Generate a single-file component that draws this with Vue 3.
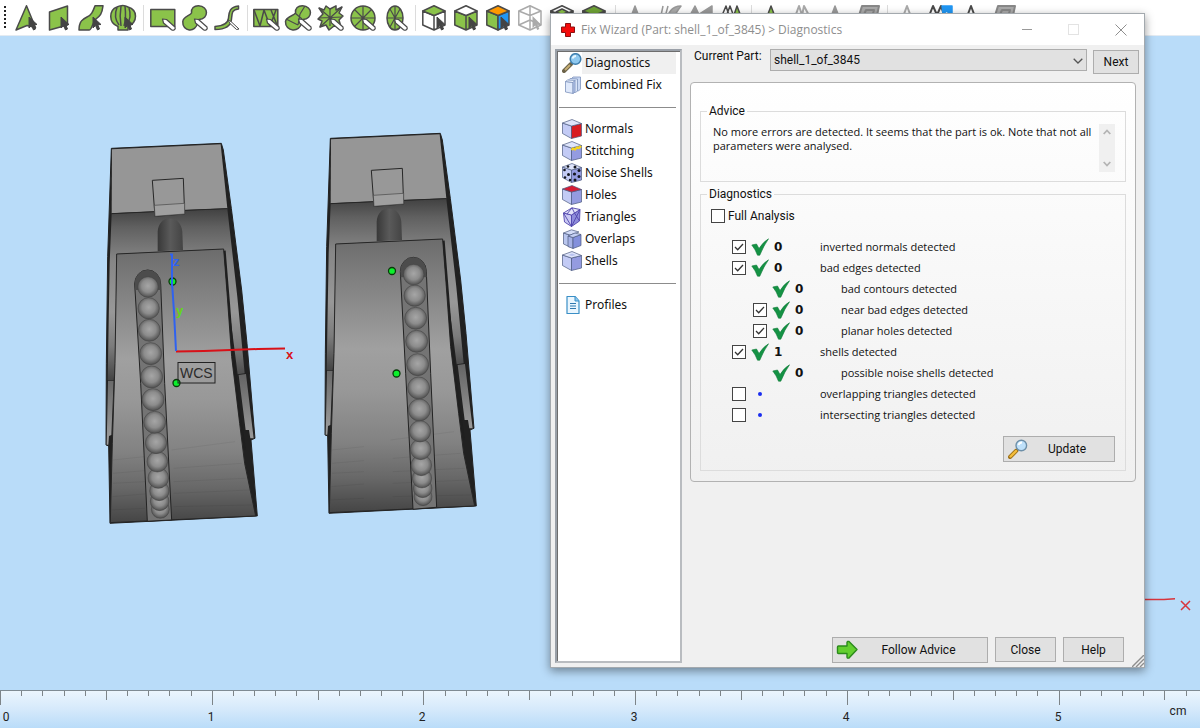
<script setup>
import { ref } from 'vue'

const tools = [
  'tri', 'quad', 'strip', 'shell', '|',
  'rect', 'blob', 'curve', '|',
  'mesh', 'meshblob', 'burst', 'wheel', 'oval', '|',
  'cubeTop', 'cubeSides', 'cubeColor', 'cubeGhost', 'cubeOpen', 'cubeFull', '|',
  'peakGrey', 'arcGrey', 'pairGrey', 'pairGreen', '|',
  'peakGreen', 'linesGrey', 'peakGrey', 'slab', '|',
  'peakOutline', 'peaksBlue', 'peakDark', 'slab'
]

const menu = [
  [{ name: 'Diagnostics', icon: 'lens' }, { name: 'Combined Fix', icon: 'stack' }],
  [
    { name: 'Normals', icon: 'normals' },
    { name: 'Stitching', icon: 'stitching' },
    { name: 'Noise Shells', icon: 'noise' },
    { name: 'Holes', icon: 'holes' },
    { name: 'Triangles', icon: 'triangles' },
    { name: 'Overlaps', icon: 'overlaps' },
    { name: 'Shells', icon: 'shells' }
  ],
  [{ name: 'Profiles', icon: 'profiles' }]
]
const current = ref('Diagnostics')
const part = ref('shell_1_of_3845')
const full = ref(false)

const rows = ref([
  { text: 'inverted normals detected', count: '0', box: true, on: true },
  { text: 'bad edges detected', count: '0', box: true, on: true },
  { text: 'bad contours detected', count: '0', sub: true },
  { text: 'near bad edges detected', count: '0', sub: true, box: true, on: true },
  { text: 'planar holes detected', count: '0', sub: true, box: true, on: true },
  { text: 'shells detected', count: '1', box: true, on: true },
  { text: 'possible noise shells detected', count: '0', sub: true },
  { text: 'overlapping triangles detected', count: '', box: true, on: false },
  { text: 'intersecting triangles detected', count: '', box: true, on: false }
])

const ballsA = [
  [159, 471, 31], [161, 535, 32], [163, 601, 33], [167, 671, 33], [170, 741, 33], [174, 809, 33], [179, 877, 33],
  [183, 939, 32], [187, 995, 31], [190, 1044, 31], [193, 1083, 29], [194, 1114, 28], [196, 1138, 27]
]
const ballsB = [
  [299, 464, 31], [302, 527, 32], [305, 595, 33], [308, 664, 33], [311, 734, 33], [314, 804, 33], [316, 870, 33],
  [318, 934, 32], [320, 988, 31], [322, 1036, 31], [324, 1075, 29], [326, 1105, 28], [327, 1130, 27]
]
const models = [
  {
    at: 'translate(95 130) scale(0.3333)', balls: [...ballsA].reverse(),
    slot: 'M119 462 A39 42 0 0 1 197 462 L209 760 L230 1170 L157 1174 L137 760 Z',
    cap: 'M119 462 A39 42 0 0 1 197 462 L197 480 L120 480 Z'
  },
  {
    at: 'translate(314 120) scale(0.3333)', balls: [...ballsB].reverse(),
    slot: 'M259 454 A39 42 0 0 1 337 454 L350 760 L368 1162 L297 1168 L275 760 Z',
    cap: 'M259 454 A39 42 0 0 1 337 454 L338 472 L260 472 Z'
  }
]

const step = 21.17
const ticks = Array.from({ length: 57 }, (_, i) => ({
  x: Math.round(i * step) + 0.5,
  len: i % 10 === 0 ? 14 : i % 5 === 0 ? 9 : 5
}))
const marks = [0, 1, 2, 3, 4, 5].map(n => ({ n, x: n ? Math.round(n * step * 10) - 1 : 6 }))
</script>

<template>
  <div class="app">
    <header class="toolbar" aria-label="Marking tools">
      <span class="grip"></span>
      <template v-for="(t, i) in tools" :key="i">
        <span v-if="t === '|'" class="sep"></span>
        <button v-else type="button" class="tool" :aria-label="t">
          <svg width="26" height="26" viewBox="0 0 26 26" fill="#8bc34a" stroke="#4a4a4a" stroke-width="1.5" stroke-linejoin="round">
            <path v-if="t === 'tri'" d="M12.5 .8 L2 25 L13 20.5 L21.5 22.5Z" />
            <path v-if="t === 'quad'" d="M3.5 7 L21.5 1 V20 L3.5 25Z" />
            <path v-if="t === 'strip'" d="M17 .8 H25 C24 9 22 11 18 14 C14 18 14 25 11 25 H1 C1 16 5 14 9 12 C14 10 15 6 17 .8Z" />
            <g v-if="t === 'shell'">
              <path d="M8 25 V21.500 C-2 18 -1 5 7 2 Q13 -1 18 2 C28 5 28 17 18 21.500 V25Z" />
              <path fill="none" d="M7 2.500 C4 10 6 16 9 20 M11 1 C9.500 10 10 15 11 21 M15 1 C16 10 16 15 14 21 M19 3 C21 9 20 15 17 20" />
            </g>
            <rect v-if="t === 'rect'" x=".8" y="4.500" width="24" height="17" />
            <path v-if="t === 'blob'" d="M9.500 8 C9 3 12 .8 16.500 .8 C27 1 27 14 17 14.500 C15.500 15 16 16 15.500 18 C14 28 0 27 .8 16.500 C1.500 11 8 11 9.500 8Z" />
            <path v-if="t === 'curve'" d="M24.500 1 C15 2 15 8 14.500 13 C14 19 8 21 1 21.500 V24.500 C11 24.500 17 21 17.500 14 C18 8 18 4.500 24.500 4Z" />
            <g v-if="t === 'mesh'">
              <rect x="-.2" y="4.500" width="24" height="17" />
              <path fill="none" d="M0 5 L6 21 L10 5 L16 21 L22 5 M17 5 L23 20" />
            </g>
            <g v-if="t === 'meshblob'">
              <path d="M9.500 8 C9 3 12 .8 16.500 .8 C27 1 27 14 17 14.500 C15.500 15 16 16 15.500 18 C14 28 -1 27 -.5 16.500 C.5 11 8 11 9.500 8Z" />
              <path fill="none" stroke-width="1.200" d="M14 9 L19 1 M9 8 L16 14 M14 9 L12 20 M0 14 L12 20" />
            </g>
            <g v-if="t === 'burst'">
              <path d="M1 3 L6 5 L8 1 L12 4 L18 .8 L18 5 L24 2 L21 8 L25 11 L21 15 L23 22 L16 21 L11 25 L8 20 L2 22 L4 16 L0 14 L5 9Z" />
              <path fill="none" stroke-width="1.200" d="M1 3 L23 22 M24 2 L2 22 M12 4 V21 M1 13 L24 12" />
            </g>
            <g v-if="t === 'wheel'">
              <circle cx="13" cy="13" r="12" />
              <path fill="none" stroke-width="1.200" d="M13 1 V25 M1 13 H25 M4.500 4.500 L21.500 21.500 M21.500 4.500 L4.500 21.500" />
            </g>
            <g v-if="t === 'oval'">
              <ellipse cx="13" cy="13" rx="8" ry="12" />
              <path fill="none" stroke-width="1.200" d="M13 1 V25 M5 13 H21 M8 4 L18 22 M18 4 L8 22" />
            </g>
            <g v-if="t === 'cubeTop'">
              <path fill="#fff" d="M.8 6 L12 10.500 L23 6 V20 L12 25 L.8 20Z M12 10.500 V25" />
              <path d="M12 .8 L23 6 L12 10.500 L.8 6Z" />
            </g>
            <g v-if="t === 'cubeSides' || t === 'cubeFull' || t === 'cubeOpen'">
              <path d="M.8 6 L12 10.500 L23 6 V20 L12 25 L.8 20Z M12 10.500 V25" />
              <path :fill="t === 'cubeFull' ? '#6fa336' : '#fff'" d="M12 .8 L23 6 L12 10.500 L.8 6Z" />
              <path v-if="t === 'cubeOpen'" fill="#8bc34a" d="M12 4 L18 7 L12 9.500 L6 7Z" />
            </g>
            <g v-if="t === 'cubeColor'">
              <path d="M.8 6 L12 10.500 V25 L.8 20Z" />
              <path fill="#2196f3" d="M23 6 L12 10.500 V25 L23 20Z" />
              <path fill="#ff9800" d="M12 .8 L23 6 L12 10.500 L.8 6Z" />
            </g>
            <g v-if="t === 'cubeGhost'" fill="#fff" stroke="#aaa">
              <path d="M12 .8 L23 6 V20 L12 25 L.8 20 V6Z" />
              <path fill="none" d="M.8 6 L12 10.500 L23 6 M12 10.500 V25 M.8 20 L12 15 L23 20 M12 1 V15" />
              <path fill="#aaa" stroke="none" d="M14.500 11 V23 L17.200 20.500 L19.200 25 L21.400 24 L19.500 19.700 L23 19.500Z" />
            </g>
            <path v-if="t === 'peakGrey'" fill="#999" stroke="#999" d="M13 1 L22 25 H4Z" />
            <path v-if="t === 'peakGreen'" d="M13 1 L22 25 H4Z" />
            <path v-if="t === 'peakDark'" fill="#fff" stroke-width="2" d="M13 1 L22 25 H4Z" />
            <path v-if="t === 'peakOutline'" fill="#fff" stroke="#aaa" stroke-width="2" d="M13 1 L22 25 H4Z" />
            <path v-if="t === 'arcGrey'" fill="#aaa" stroke="#999" d="M9 1 L5 20 M14 1 L11 12 M27 1 C17 1 13 8 12 20 L22 22 C18 12 22 8 27 1Z" />
            <path v-if="t === 'pairGrey'" fill="#999" stroke="#999" d="M9 1 L2 14 H15Z M26 1 V14 L12 10Z" />
            <g v-if="t === 'pairGreen'">
              <path fill="#fff" d="M8 1 L0 20 H14Z M12 1 L5 20 H19Z" />
              <path d="M19 1 L12 22 H27Z" />
            </g>
            <path v-if="t === 'linesGrey'" fill="none" stroke="#aaa" stroke-width="2" d="M2 20 L9 1 L14 16 M10 20 L14 1 L24 20" />
            <path v-if="t === 'slab'" fill="#aaa" stroke="#888" stroke-width="2" d="M8 1 H25 L21 20 H2Z M12 5 H20 L18 12 H9Z" />
            <g v-if="t === 'peaksBlue'">
              <path fill="#fff" stroke-width="2" d="M1 16 L7 1 L11 10 L15 1 L20 16Z" />
              <path fill="#2196f3" stroke="#2196f3" d="M16 1 H26 V12 L21 6 L17 9Z" />
            </g>
            <path v-if="['tri','quad','strip','shell','cubeTop','cubeSides','cubeColor'].includes(t)" fill="#444" stroke="#444" stroke-width="1" d="M15 12 V23 L17.500 20.500 L19.500 25 L21.500 24 L19.800 19.700 L23 19.500Z" />
            <path v-if="['rect','blob','mesh','meshblob','burst','wheel','oval'].includes(t)" fill="#fff" stroke-width="1.200" d="M12.500 14 L16.500 14.500 L25 22 C26 24.500 23.500 26 21.500 24.800 L13.500 18Z" />
            <path v-if="t === 'curve'" fill="#fff" stroke-width="1" d="M14 15 L17 16.500 L25 24 L22.500 24.500 L16 18.500Z" />
          </svg>
        </button>
      </template>
    </header>

    <main class="view">
      <svg class="scene" viewBox="0 36 1200 655" preserveAspectRatio="xMinYMin slice">
        <defs>
          <linearGradient id="back" x1="0" y1="240" x2="0" y2="750" gradientUnits="userSpaceOnUse">
            <stop offset="0" stop-color="#434343" /><stop offset=".1" stop-color="#606060" />
            <stop offset=".3" stop-color="#868686" /><stop offset=".6" stop-color="#989898" />
            <stop offset=".8" stop-color="#7c7c7c" /><stop offset="1" stop-color="#444" />
          </linearGradient>
          <linearGradient id="front" x1="0" y1="357" x2="0" y2="1180" gradientUnits="userSpaceOnUse">
            <stop offset="0" stop-color="#6c6c6c" /><stop offset=".15" stop-color="#808080" />
            <stop offset=".4" stop-color="#a0a0a0" /><stop offset=".55" stop-color="#989898" />
            <stop offset=".74" stop-color="#828282" /><stop offset=".87" stop-color="#686868" />
            <stop offset="1" stop-color="#444" />
          </linearGradient>
          <linearGradient id="flap" x1="0" y1="735" x2="0" y2="940" gradientUnits="userSpaceOnUse">
            <stop offset="0" stop-color="#656565" /><stop offset="1" stop-color="#9e9e9e" />
          </linearGradient>
          <linearGradient id="bore" x1="0" y1="0" x2="1" y2="0">
            <stop offset="0" stop-color="#383838" /><stop offset=".5" stop-color="#5a5a5a" /><stop offset="1" stop-color="#444" />
          </linearGradient>
          <radialGradient id="ball" cx=".5" cy=".45" r=".55">
            <stop offset="0" stop-color="#a6a6a6" /><stop offset=".55" stop-color="#8c8c8c" /><stop offset="1" stop-color="#4f4f4f" />
          </radialGradient>
        </defs>

        <g v-for="(m, i) in models" :key="i" :transform="m.at" stroke-linejoin="round">
          <path fill="#212121" stroke="#212121" stroke-width="3" d="M49 55 L379 40 L385 60 L409 235 L440 480 L456 640 L464 735 L480 925 L468 930 L487 1158 L45 1180 L41 948 L33 945 L34 700 L38 380Z" />
          <path fill="url(#back)" d="M50 251 L397 236 L427 500 L449 730 L428 733 L406 560 L386 357 L65 372 L60 700 L56 750 L38 750 L44 400Z" />
          <path fill="url(#flap)" d="M39 752 H56 L49 915 L42 918 L40 944 L35 944Z M431 735 L453 732 L476 925 L466 925 L462 900 L452 900Z" />
          <path fill="#969696" d="M51 58 L377 43 L397 235 L50 250Z" />
          <path fill="none" stroke="#262626" stroke-width="3" d="M50 251 L178 245 M269 241 L397 236" />
          <path fill="#989898" stroke="#262626" stroke-width="3" d="M172 151 L265 145 L269 252 L180 259Z" />
          <path fill="#a0a0a0" stroke="#444" stroke-width="2" d="M178 226 L269 220 V252 L180 259Z" />
          <path fill="url(#bore)" d="M188 364 V305 C190 252 258 252 262 305 L264 360Z" />
          <path fill="url(#front)" stroke="#262626" stroke-width="3" d="M65 372 L386 357 L397 500 L410 680 L434 880 L449 1000 L482 1158 L46 1178 L52 940 L60 700Z" />
          <path fill="none" stroke="#1f1f1f" stroke-width="6" d="M389 362 L402 520 L414 680 L437 870 L450 960" />
          <g fill="none" stroke="#000" stroke-width="3" opacity=".06">
            <path d="M54 990 L150 980 M54 1030 L150 1022 M236 1015 L440 1000 M54 1060 L150 1055 M236 1055 L452 1045 M52 1100 L150 1092 M236 1090 L466 1080 M50 1140 L150 1135 M236 1130 L472 1125 M230 960 L420 935" />
          </g>
          <path :d="m.slot" fill="#747474" stroke="#222" stroke-width="3" />
          <path :d="m.cap" fill="#4c4c4c" />
          <circle v-for="b in m.balls" :key="b[1]" :cx="b[0]" :cy="b[1]" :r="b[2]" fill="url(#ball)" stroke="#404040" stroke-width="1.500" />
        </g>

        <path fill="none" stroke="#d81118" stroke-width="2" d="M176 351.500 L204 351 L230 350 L258 349 L285 348.500" />
        <path fill="none" stroke="#2f62f0" stroke-width="2" d="M170 254.500 H172 V282 L174 312 L176 351" />
        <g fill="#0cf02c" stroke="#0a3a0a" stroke-width="1.300">
          <circle cx="172.500" cy="281.500" r="3.500" /><circle cx="176.500" cy="383" r="3.500" />
          <circle cx="392" cy="271" r="3.500" /><circle cx="396.500" cy="373.500" r="3.500" />
        </g>
        <path stroke="#2f62f0" stroke-width="2" d="M172 276 V287" />
        <g class="axis">
          <text x="173" y="266" fill="#2f62f0">z</text>
          <text x="176" y="315" fill="#62d818">y</text>
          <text x="286" y="359" fill="#d81118">x</text>
        </g>
        <rect x="178" y="362.500" width="37" height="20.500" fill="none" stroke="#222" />
        <text class="wcs" x="180" y="378">WCS</text>
        <path stroke="#d8343c" stroke-width="1.500" fill="none" d="M1140 599.500 H1164 L1175 598.800 M1181 601 L1190 610 M1190 601 L1181 610" />
      </svg>
    </main>

    <footer class="ruler">
      <svg class="scale" viewBox="0 0 1200 38" preserveAspectRatio="xMinYMin slice">
        <path v-for="t in ticks" :key="t.x" :d="`M${t.x} 0 v${t.len}`" stroke="#7d8488" />
        <text v-for="m in marks" :key="m.n" :x="m.x" y="30" text-anchor="middle">{{ m.n }}</text>
        <text x="1178" y="24" text-anchor="middle">cm</text>
      </svg>
    </footer>

    <section class="dialog" role="dialog" aria-labelledby="dlg-title">
      <div class="titlebar">
        <svg width="16" height="16" viewBox="0 0 16 16"><path fill="#f40b0b" stroke="#8d1010" d="M5.500 1.500 H10.500 V5 H14.500 V10.500 H10.500 V14.500 H5.500 V10.500 H1.500 V5 H5.500Z" /></svg>
        <h1 id="dlg-title">Fix Wizard (Part: shell_1_of_3845) &gt; Diagnostics</h1>
        <button type="button" class="win" aria-label="Minimize"><svg width="12" height="12" viewBox="0 0 12 12"><path d="M1 5.500 H11" stroke="#999" /></svg></button>
        <button type="button" class="win" aria-label="Maximize" disabled><svg width="12" height="12" viewBox="0 0 12 12"><rect x=".500" y=".500" width="10" height="10" fill="none" stroke="#e3e3e3" /></svg></button>
        <button type="button" class="win" aria-label="Close window"><svg width="12" height="12" viewBox="0 0 12 12"><path d="M.5 .5 L11.500 11.500 M11.500 .5 L.5 11.500" stroke="#8f8f8f" /></svg></button>
      </div>

      <div class="body">
        <nav class="side">
          <ul v-for="(group, g) in menu" :key="g">
            <li v-for="item in group" :key="item.name">
              <button type="button" class="item" :class="{ active: current === item.name }" @click="current = item.name">
                <svg width="20" height="20" viewBox="0 0 20 20" stroke-linejoin="round">
                  <g v-if="item.icon === 'lens'">
                    <path d="M9 11 L2 18" stroke="#6b6248" stroke-width="4" stroke-linecap="round" />
                    <path d="M8 12 L3 17" stroke="#c6ad72" stroke-width="2" />
                    <circle cx="13.500" cy="6" r="5.300" fill="#8fc9f0" stroke="#3f7fae" stroke-width="1.500" />
                    <path d="M10.500 5.500 Q11.500 3 14 3" stroke="#e6f6ff" stroke-width="2" fill="none" />
                  </g>
                  <g v-else-if="item.icon === 'stack'" stroke="#7d93bd" stroke-width=".8">
                    <path fill="#c9d8f3" d="M9 4 L11 2 H18.500 V14 L16.500 16 L9 15Z" />
                    <path fill="#dae5f8" d="M6 5.500 L8 3.500 L15.500 4 V16 L13.500 17.500 L6 16.500Z" />
                    <path fill="#dfe9fb" d="M3.500 6.500 L11 7.500 V18.500 L3.500 17Z" />
                    <path fill="#f2f6fe" d="M3.500 6.500 L5.500 5 L13 5.500 L11 7.500Z" />
                    <path fill="#b4c6ec" d="M11 7.500 L13 5.500 V17 L11 18.500Z" />
                  </g>
                  <g v-else-if="item.icon === 'profiles'">
                    <path d="M5 1.500 H13 L17 6 V18.500 H5Z" fill="#eaf6fe" stroke="#3a8fc6" stroke-width="1.200" />
                    <path d="M13 1.500 V6 H17" fill="#8fcaf0" stroke="#3a8fc6" />
                    <path d="M8 8.500 H14 M8 11 H14 M8 13.500 H14" stroke="#2f78ae" stroke-width="1.200" />
                  </g>
                  <g v-else-if="item.icon === 'triangles'" stroke="#5146ad" stroke-width=".9">
                    <path fill="#c9c8f3" d="M1.500 6 L9.500 8 V19.500 L2.500 15Z" />
                    <path fill="#8f8ddb" d="M9.500 8 L18 2.500 L17.500 14 L9.500 19.500Z" />
                    <path fill="#e3e3fa" d="M1.500 6 L10 .8 L18 2.500 L9.500 8Z" />
                    <path fill="none" d="M1.500 6 L9.500 19.500 L18 2.500 M5 7 L10 .8 L12.500 6 L17.500 14" />
                  </g>
                  <g v-else-if="item.icon === 'overlaps'" stroke="#4c5a80" stroke-width=".7">
                    <path fill="#b9c6ee" d="M1.500 4 L8 6 V18 L1.500 15Z" />
                    <path fill="#d3dcf7" d="M1.500 4 L9.500 .8 L17 3 L8 6Z" />
                    <path fill="#a6b2e6" d="M6 7 L11 8.500 V19.500 L6 17.500Z" />
                    <path fill="#8390dc" d="M11 8.500 L19 5.500 V16.500 L11 19.500Z" />
                    <path fill="#c5d0f3" d="M6 7 L13 4 L19 5.500 L11 8.500Z" />
                  </g>
                  <g v-else stroke="#4c5a80" stroke-width=".7">
                    <path fill="#c3cbf5" d="M.5 4 L9.500 7 V19.500 L.5 14.500Z" />
                    <path :fill="item.icon === 'normals' ? '#d81c22' : '#949be0'" d="M9.500 7 L19.500 4.500 V17 L9.500 19.500Z" />
                    <path :fill="item.icon === 'holes' ? '#d81c34' : '#dfe5fb'" d="M.5 4 L10 .5 L19.500 4.500 L9.500 7Z" />
                    <path v-if="item.icon === 'stitching'" fill="none" stroke="#f4d321" stroke-width="2.400" d="M9.500 9 L11 7.500 L13 8.500 L15 6.500 L17 7 L19 5" />
                    <path v-if="item.icon === 'shells'" fill="#b9c3ee" stroke="none" d="M6 4 L10 2.500 L14 4 L10 5Z" />
                    <g v-if="item.icon === 'noise'" fill="#15171f" stroke="none">
                      <circle cx="2.500" cy="7" r="1.300" /><circle cx="6.500" cy="11.500" r="1.500" /><circle cx="3" cy="14.500" r="1.300" />
                      <circle cx="6" cy="3.500" r="1.300" /><circle cx="13" cy="4" r="1.500" /><circle cx="12.500" cy="11" r="1.600" />
                      <circle cx="17" cy="7.500" r="1.500" /><circle cx="13" cy="17" r="1.500" /><circle cx="17" cy="13.500" r="1.500" />
                      <circle cx="8" cy="17" r="1.200" />
                    </g>
                  </g>
                </svg>
                <span>{{ item.name }}</span>
              </button>
            </li>
          </ul>
        </nav>

        <div class="main">
          <div class="partrow">
            <label for="part">Current Part:</label>
            <div class="combo">
              <select id="part" v-model="part"><option>shell_1_of_3845</option></select>
              <svg width="10" height="6" viewBox="0 0 10 6"><path d="M.7 .7 L5 5 L9.300 .7" fill="none" stroke="#555" stroke-width="1.300" /></svg>
            </div>
            <button type="button" class="btn next">Next</button>
          </div>

          <div class="panel">
            <fieldset class="advice">
              <legend>Advice</legend>
              <p>No more errors are detected. It seems that the part is ok. Note that not all parameters were analysed.</p>
              <div class="scroll">
                <button type="button" aria-label="Scroll up"><svg width="8" height="6" viewBox="0 0 8 6"><path d="M.7 5 L4 1.500 L7.300 5" fill="none" stroke="#b4b4b4" stroke-width="1.800" /></svg></button>
                <button type="button" aria-label="Scroll down"><svg width="8" height="6" viewBox="0 0 8 6"><path d="M.7 1 L4 4.500 L7.300 1" fill="none" stroke="#b4b4b4" stroke-width="1.800" /></svg></button>
              </div>
            </fieldset>

            <fieldset class="diag">
              <legend>Diagnostics</legend>
              <label class="full"><input v-model="full" type="checkbox"><span>Full Analysis</span></label>
              <div class="rows">
                <component :is="r.box ? 'label' : 'div'" v-for="r in rows" :key="r.text" class="row" :class="{ sub: r.sub }">
                  <input v-if="r.box" v-model="r.on" type="checkbox">
                  <span v-else></span>
                  <svg v-if="r.count" width="18" height="18" viewBox="0 0 18 18"><path fill="#149244" stroke="#0d7a38" stroke-width=".6" d="M.8 7 L5.500 6 L8 10.500 Q12 4 17.500 .8 Q12.500 8 8.800 17.200 L6.500 17.200 Q4.500 11.500 .8 7Z" /></svg>
                  <svg v-else width="18" height="18" viewBox="0 0 18 18"><circle cx="9" cy="9" r="2" fill="#1a2df0" /></svg>
                  <b>{{ r.count }}</b>
                  <span>{{ r.text }}</span>
                </component>
              </div>
              <button type="button" class="btn update">
                <svg width="20" height="20" viewBox="0 0 20 20">
                  <path d="M8.500 11.500 L2 18" stroke="#9c6f16" stroke-width="4" stroke-linecap="round" />
                  <path d="M8 12 L2.500 17.500" stroke="#f4bd3a" stroke-width="2.400" stroke-linecap="round" />
                  <circle cx="13.300" cy="6.500" r="5.300" fill="#bfe1fa" stroke="#6d8fa8" stroke-width="1.400" />
                  <path d="M10.500 6 Q11.500 3.500 14 3.500" stroke="#fff" stroke-width="1.800" fill="none" />
                </svg>
                <span>Update</span>
              </button>
            </fieldset>
          </div>

          <div class="actions">
            <button type="button" class="btn follow">
              <svg width="22" height="20" viewBox="0 0 22 20"><path d="M1.500 7 Q1.500 6 2.500 6 H11 V2.500 Q11.500 1 13 1.500 L21 9.500 L13 18 Q11 18.500 11 17 V13.500 H2.500 Q1.500 13.500 1.500 12.500Z" fill="#63cf2f" stroke="#2b8a1c" stroke-width="1.400" stroke-linejoin="round" /></svg>
              <span>Follow Advice</span>
            </button>
            <button type="button" class="btn small">Close</button>
            <button type="button" class="btn small">Help</button>
          </div>
        </div>
      </div>
      <svg class="resize" width="12" height="12" viewBox="0 0 12 12"><path d="M0 12 L12 0 M4 12 L12 4 M8 12 L12 8" stroke="#8e8e8e" stroke-width="1.400" /></svg>
    </section>
  </div>
</template>

<style>
html, body { margin: 0; }
</style>

<style scoped>
* { box-sizing: border-box; }
.app {
  position: relative;
  display: flex;
  flex-direction: column;
  height: 100vh;
  overflow: hidden;
  background: #b9dcf9;
  color: #111;
  font: 12px/14px Roboto, "Liberation Sans", sans-serif;
}
button { font: inherit; color: inherit; padding: 0; margin: 0; border: 0; background: none; }
.toolbar {
  display: flex;
  flex: none;
  height: 36px;
  padding: 5px 0 0 4px;
  background: #fff;
  border-bottom: 1px solid #e4ebf2;
}
.grip { width: 7px; flex: none; height: 24px; margin-top: 1px; background: repeating-linear-gradient(#222 0 2px, transparent 2px 4px) no-repeat 0 0 / 2px 100%; }
.tool { width: 32px; height: 26px; flex: none; }
.tool svg { display: block; margin: 0 auto; overflow: visible; }
.sep { flex: none; width: 8px; height: 26px; background: linear-gradient(#dcdcdc, #dcdcdc) no-repeat center / 1px 100%; }
.view { flex: 1; min-height: 0; }
.scene { display: block; width: 100%; height: 100%; }
.axis { font: bold 13px "Liberation Sans", Arial, sans-serif; }
.wcs { font: 14px "Liberation Sans", Arial, sans-serif; fill: #2b2b2b; }
.ruler { flex: none; height: 38px; border-top: 1px solid #7f8b93; background: linear-gradient(#ebf5fd, #d5e9fb 50%, #b9dcf9); }
.scale { display: block; width: 100%; height: 100%; font: 12px Roboto, Arial, sans-serif; fill: #222; }

.dialog {
  position: absolute;
  left: 550px;
  top: 13px;
  width: 595px;
  height: 655px;
  display: flex;
  flex-direction: column;
  background: #f0f0f0;
  border: 1px solid #a3a9ae;
  box-shadow: 0 3px 9px rgba(0, 0, 0, .42);
}
.titlebar { flex: none; display: flex; align-items: center; height: 31px; padding-left: 9px; background: #fff; color: #8e8e8e; }
.titlebar h1 { flex: 1; margin: 0 0 0 5px; font: 12px/16px "Open Sans", sans-serif; }
.win { width: 47px; height: 30px; }
.win svg { display: block; margin: auto; }
.body { flex: 1; min-height: 0; display: flex; gap: 8px; padding: 4px 5px 4px 4px; }
.side { flex: none; width: 127px; background: #fff; border: 2px solid #9aa0a8; border-right-color: #b9bcc0; border-bottom-color: #b9bcc0; box-shadow: inset 1px 1px #6d6d6d; padding: 1px 4px 0 2px; font: 12px/22px "Noto Sans", sans-serif; }
.side ul { list-style: none; margin: 0; padding: 0; }
.side ul + ul { margin-top: 11px; padding-top: 10px; border-top: 1px solid #8c8c8c; }
.item { display: flex; align-items: center; width: 100%; height: 22px; padding-left: 3px; text-align: left; }
.item span { flex: 1; height: 22px; padding-left: 3px; }
.item.active span { background: #f0f0f0; }
.item svg { flex: none; }

.main { flex: 1; min-width: 0; display: flex; flex-direction: column; }
.partrow { display: flex; align-items: flex-start; padding: 0 0 0 4px; }
.partrow label { width: 76px; }
.combo { position: relative; flex: 1; margin-right: 6px; }
.combo select { display: block; width: 100%; height: 22px; appearance: none; margin: 0; padding: 0 20px 0 3px; border: 1px solid #adadad; border-radius: 0; background: #e1e1e1; font: inherit; color: inherit; }
.combo svg { position: absolute; right: 4px; top: 9px; pointer-events: none; }
.btn { display: flex; align-items: center; justify-content: center; border: 1px solid #adadad; background: #e1e1e1; }
.next { width: 46px; height: 24px; margin-top: 1px; }
.panel { margin: 8px 3px 0 0; padding: 21px 9px 10px; border: 1px solid #b2b2b2; border-radius: 4px; background: linear-gradient(#fff, #f0f0f0); }
fieldset { margin: 0; min-width: 0; border: 1px solid #dcdcdc; padding: 0; }
legend { margin-left: 6px; padding: 0 2px; font: 12px/14px Roboto, "Liberation Sans", sans-serif; }
.advice { display: flex; height: 78px; font: 11px/14px "Open Sans", sans-serif; }
.advice p { flex: 1; margin: 7px 0 0 12px; }
.scroll { display: flex; flex-direction: column; justify-content: space-between; width: 16px; height: 48px; margin: 6px 10px 0 0; background: #f0f0f0; }
.scroll button { height: 16px; }
.scroll svg { display: block; margin: auto; }
.diag { margin-top: 5px; display: flex; flex-direction: column; }
.full { display: flex; align-items: center; height: 20px; margin: 5px 0 0 10px; }
.full span { margin-left: 3px; }
input[type="checkbox"] { appearance: none; width: 14px; height: 14px; margin: 0; border: 1px solid #444; background: #fff; }
input[type="checkbox"]:checked { background: #fff url("data:image/svg+xml,%3Csvg xmlns='http://www.w3.org/2000/svg' viewBox='0 0 12 12'%3E%3Cpath d='M2 6 L4.700 8.700 L10 3' fill='none' stroke='%23333' stroke-width='1.300'/%3E%3C/svg%3E"); }
.rows { margin-top: 10px; font: 11px/21px "Open Sans", sans-serif; }
.row { display: grid; grid-template-columns: 19px 23px 46px 1fr; align-items: center; height: 21px; padding-left: 31px; }
.row.sub { padding-left: 52px; }
.row b { padding-top: 2px; font: bold 12px/19px "DejaVu Sans", sans-serif; }
.update { align-self: flex-end; width: 112px; height: 26px; margin: 11px 10px 8px; padding-left: 4px; }
.update span, .follow span { flex: 1; text-align: center; }
.update span { padding-right: 8px; }
.actions { display: flex; gap: 7px; justify-content: flex-end; margin-top: auto; padding-right: 15px; }
.follow { width: 156px; height: 26px; padding-left: 3px; }
.follow span { padding-right: 8px; }
.small { width: 61px; height: 25px; }
.resize { position: absolute; right: 0; bottom: 0; }
</style>
